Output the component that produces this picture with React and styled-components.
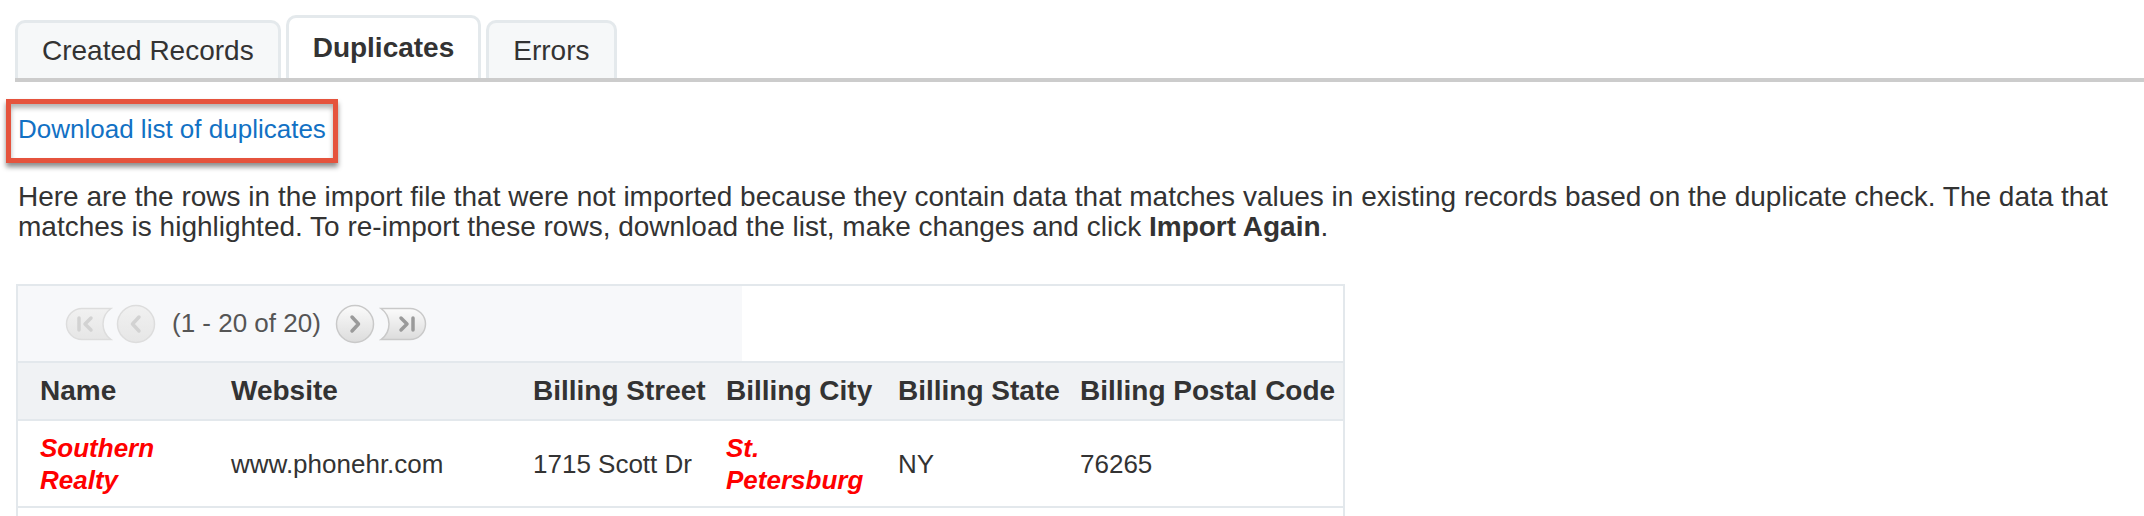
import React, { useId } from 'react';
import styled, { createGlobalStyle } from 'styled-components';

const GlobalStyle = createGlobalStyle`
  html, body {
    margin: 0;
    padding: 0;
    background: #ffffff;
    overflow: hidden;
  }
  body {
    font-family: "Liberation Sans", Arial, Helvetica, sans-serif;
    color: #333333;
  }
`;

const Page = styled.div`
  padding: 15px 0 0 15px;
`;

const TabBar = styled.div`
  display: flex;
  align-items: flex-end;
  gap: 5px;
  height: 63px;
  border-bottom: 4px solid #cccccc;
`;

const Tab = styled.div`
  box-sizing: border-box;
  display: flex;
  align-items: center;
  height: ${(p) => (p.$active ? '63px' : '58px')};
  padding: 0 24px;
  border: 3px solid #e4e9ec;
  border-bottom: none;
  border-radius: 10px 10px 0 0;
  background: ${(p) => (p.$active ? '#ffffff' : '#f6f8f9')};
  font-size: 28px;
  font-weight: ${(p) => (p.$active ? 700 : 400)};
  color: #333333;
  white-space: nowrap;
`;

const Content = styled.div`
  padding-left: 3px;
`;

const Highlight = styled.div`
  display: inline-block;
  margin: 17px 0 0 -12px;
  padding: 0 7px;
  border: 5px solid #e5533d;
  line-height: 51px;
  box-shadow: 0 4px 5px rgba(0, 0, 0, 0.45), inset 0 4px 5px rgba(0, 0, 0, 0.3);
`;

const DownloadLink = styled.a`
  color: #1271c4;
  font-size: 26px;
  text-decoration: none;
`;

const Intro = styled.p`
  margin: 19px 0 0;
  font-size: 28px;
  line-height: 30px;
  color: #333333;

  strong {
    font-weight: 700;
  }
`;

const Table = styled.div`
  width: 1329px;
  box-sizing: border-box;
  margin: 42px 0 0 -2px;
  border: 2px solid #e3e8ec;
  border-bottom: none;
`;

const PagerRow = styled.div`
  height: 75px;
  border-bottom: 2px solid #e3e8ec;
`;

const PagerBar = styled.div`
  box-sizing: border-box;
  display: flex;
  align-items: center;
  width: 724px;
  height: 100%;
  padding-left: 47px;
  background: #f7f8fa;
`;

const PagerText = styled.span`
  margin: 0 14px 0 16px;
  font-size: 26px;
  color: #555555;
`;

const PagerIcon = styled.svg`
  display: block;
  margin-right: ${(p) => p.$gap || 0}px;
`;

const Row = styled.div`
  display: grid;
  grid-template-columns: 191px 302px 193px 172px 182px 1fr;
  align-items: center;
  min-height: ${(p) => (p.$head ? '56px' : '85px')};
  background: ${(p) => (p.$head ? '#f0f2f4' : '#ffffff')};
  border-bottom: 2px solid #e3e8ec;
`;

const Cell = styled.div`
  padding: 0 10px 0 22px;
  font-size: ${(p) => (p.$head ? '28px' : '26px')};
  font-weight: ${(p) => (p.$head || p.$match ? 700 : 400)};
  font-style: ${(p) => (p.$match ? 'italic' : 'normal')};
  line-height: 32px;
  color: ${(p) => (p.$match ? '#ff0000' : '#333333')};
  white-space: ${(p) => (p.$head ? 'nowrap' : 'normal')};
`;

const TableTail = styled.div`
  height: 40px;
`;

const Gradient = ({ id, enabled }) => (
  <defs>
    <linearGradient id={id} x1="0" y1="0" x2="0" y2="1">
      <stop offset="0" stopColor={enabled ? '#fbfbfb' : '#f1f1f1'} />
      <stop offset="1" stopColor={enabled ? '#dcdcdc' : '#e6e6e6'} />
    </linearGradient>
  </defs>
);

const PagerButton = ({ kind, enabled, gap }) => {
  const id = useId().replace(/:/g, '');
  const stroke = enabled ? '#c9c9c9' : '#dddddd';
  const glyph = enabled ? '#9a9a9a' : '#d2d2d2';

  if (kind === 'prev' || kind === 'next') {
    const chevron = kind === 'prev' ? 'M23 13 L16.5 20 L23 27' : 'M17 13 L23.5 20 L17 27';
    return (
      <PagerIcon width="40" height="40" viewBox="0 0 40 40" $gap={gap}>
        <Gradient id={id} enabled={enabled} />
        <circle cx="20" cy="20" r="18.5" fill={`url(#${id})`} stroke={stroke} strokeWidth="1.5" />
        <path d={chevron} fill="none" stroke={glyph} strokeWidth="3.5" strokeLinecap="round" strokeLinejoin="round" />
      </PagerIcon>
    );
  }

  const shape =
    kind === 'first'
      ? 'M17 1.5 H46 A19 19 0 0 0 46 32.5 H17 A15.5 15.5 0 0 1 17 1.5 Z'
      : 'M2 1.5 H31 A15.5 15.5 0 0 1 31 32.5 H2 A19 19 0 0 0 2 1.5 Z';
  const mark =
    kind === 'first'
      ? 'M14 11 V23 M26 11 L20 17 L26 23'
      : 'M34 11 V23 M22 11 L28 17 L22 23';

  return (
    <PagerIcon width="48" height="34" viewBox="0 0 48 34" $gap={gap}>
      <Gradient id={id} enabled={enabled} />
      <path d={shape} fill={`url(#${id})`} stroke={stroke} strokeWidth="1.5" />
      <path d={mark} fill="none" stroke={glyph} strokeWidth="3.5" strokeLinecap="round" strokeLinejoin="round" />
    </PagerIcon>
  );
};

const tabs = [
  { name: 'Created Records' },
  { name: 'Duplicates', active: true },
  { name: 'Errors' },
];

const columns = ['Name', 'Website', 'Billing Street', 'Billing City', 'Billing State', 'Billing Postal Code'];

const rows = [
  [
    { value: 'Southern Realty', match: true },
    { value: 'www.phonehr.com' },
    { value: '1715 Scott Dr' },
    { value: 'St. Petersburg', match: true },
    { value: 'NY' },
    { value: '76265' },
  ],
];

const App = () => (
  <>
    <GlobalStyle />
    <Page>
      <TabBar>
        {tabs.map((tab) => (
          <Tab key={tab.name} $active={tab.active}>
            {tab.name}
          </Tab>
        ))}
      </TabBar>

      <Content>
        <Highlight>
          <DownloadLink href="#download">Download list of duplicates</DownloadLink>
        </Highlight>

        <Intro>
          Here are the rows in the import file that were not imported because they contain data that matches values in
          existing records based on the duplicate check. The data that
          <br />
          matches is highlighted. To re-import these rows, download the list, make changes and click{' '}
          <strong>Import Again</strong>.
        </Intro>

        <Table>
          <PagerRow>
            <PagerBar>
              <PagerButton kind="first" gap={3} />
              <PagerButton kind="prev" />
              <PagerText>(1 - 20 of 20)</PagerText>
              <PagerButton kind="next" enabled gap={4} />
              <PagerButton kind="last" enabled />
            </PagerBar>
          </PagerRow>

          <Row $head>
            {columns.map((col) => (
              <Cell key={col} $head>
                {col}
              </Cell>
            ))}
          </Row>

          {rows.map((row, i) => (
            <Row key={i}>
              {row.map((cell, j) => (
                <Cell key={j} $match={cell.match}>
                  {cell.value}
                </Cell>
              ))}
            </Row>
          ))}
          <TableTail />
        </Table>
      </Content>
    </Page>
  </>
);

export default App;
